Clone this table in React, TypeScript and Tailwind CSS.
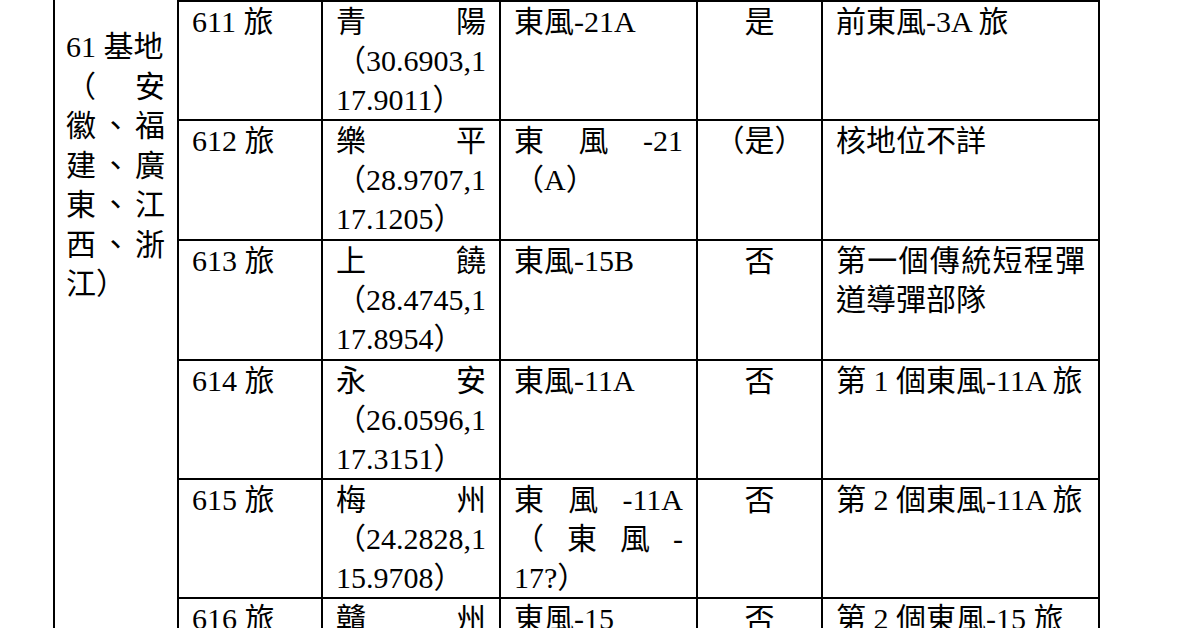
import React from 'react';

// a line is plain text, or an array whose parts are spread across the cell (justified line)
type Line = string | string[];

interface Row {
  h: string;
  unit: Line[];
  loc: Line[];
  missile: Line[];
  nuke: string;
  note: Line[];
}

const rows: Row[] = [
  {
    h: 'h-[119px]',
    unit: ['611 旅'],
    loc: [['青', '陽'], '（30.6903,1', '17.9011）'],
    missile: ['東風-21A'],
    nuke: '是',
    note: ['前東風-3A 旅'],
  },
  {
    h: 'h-[120px]',
    unit: ['612 旅'],
    loc: [['樂', '平'], '（28.9707,1', '17.1205）'],
    missile: [['東', '風', '-21'], '（A）'],
    nuke: '（是）',
    note: ['核地位不詳'],
  },
  {
    h: 'h-[120px]',
    unit: ['613 旅'],
    loc: [['上', '饒'], '（28.4745,1', '17.8954）'],
    missile: ['東風-15B'],
    nuke: '否',
    note: [['第', '一', '個', '傳', '統', '短', '程', '彈'], '道導彈部隊'],
  },
  {
    h: 'h-[119px]',
    unit: ['614 旅'],
    loc: [['永', '安'], '（26.0596,1', '17.3151）'],
    missile: ['東風-11A'],
    nuke: '否',
    note: ['第 1 個東風-11A 旅'],
  },
  {
    h: 'h-[119px]',
    unit: ['615 旅'],
    loc: [['梅', '州'], '（24.2828,1', '15.9708）'],
    missile: [['東', '風', '-11A'], ['（', '東', '風', '-'], '17?）'],
    nuke: '否',
    note: ['第 2 個東風-11A 旅'],
  },
  {
    h: 'h-[60px]',
    unit: ['616 旅'],
    loc: [['贛', '州']],
    missile: ['東風-15'],
    nuke: '否',
    note: ['第 2 個東風-15 旅'],
  },
];

const baseLines: Line[] = [
  '61 基地',
  ['（', '安'],
  ['徽', '、', '福'],
  ['建', '、', '廣'],
  ['東', '、', '江'],
  ['西', '、', '浙'],
  '江）',
];

const TextLine: React.FC<{ line: Line; tall?: boolean }> = ({ line, tall }) => {
  const lh = tall ? 'h-[39.5px] leading-[39.5px]' : 'h-[39px] leading-[39px]';
  if (Array.isArray(line)) {
    return (
      <div className={`flex justify-between whitespace-nowrap ${lh}`}>
        {line.map((part, i) => (
          <span key={i}>{part}</span>
        ))}
      </div>
    );
  }
  return <div className={`whitespace-nowrap ${lh}`}>{line}</div>;
};

const Cell: React.FC<{ width: string; lines: Line[]; center?: boolean }> = ({ width, lines, center }) => (
  <div className={`${width} h-full border-r-2 border-black px-[13px] ${center ? 'text-center' : ''}`}>
    {lines.map((l, i) => (
      <TextLine key={i} line={l} />
    ))}
  </div>
);

export default function App() {
  return (
    <div className="w-[1200px] h-[628px] overflow-hidden bg-white text-black pl-[53px] flex font-['Liberation_Serif','Noto_Sans_CJK_TC',serif] text-[30px]">
      {/* 61 基地 column, spans every row */}
      <div className="w-[126px] h-full border-l-2 border-r-2 border-black pl-[11px] pr-[12px] pt-[27px]">
        {baseLines.map((l, i) => (
          <TextLine key={i} line={l} tall />
        ))}
      </div>

      <div className="w-[921px] flex flex-col">
        {/* bottom edge of the row above */}
        <div className="h-[4px] flex border-b-2 border-black">
          <div className="w-[144px] border-r-2 border-black" />
          <div className="w-[178px] border-r-2 border-black" />
          <div className="w-[197px] border-r-2 border-black" />
          <div className="w-[125px] border-r-2 border-black" />
          <div className="w-[277px] border-r-2 border-black" />
        </div>

        {rows.map((r, i) => (
          <div key={i} className={`${r.h} flex shrink-0 border-b-2 border-black`}>
            <Cell width="w-[144px]" lines={r.unit} />
            <Cell width="w-[178px]" lines={r.loc} />
            <Cell width="w-[197px]" lines={r.missile} />
            <Cell width="w-[125px]" lines={[r.nuke]} center />
            <Cell width="w-[277px]" lines={r.note} />
          </div>
        ))}
      </div>
    </div>
  );
}
